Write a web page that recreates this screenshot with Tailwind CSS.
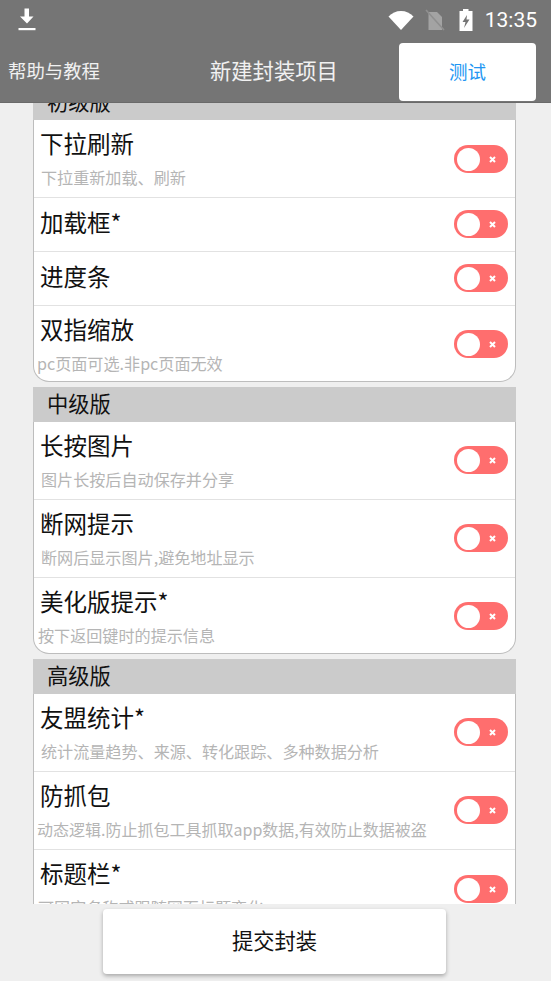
<!doctype html>
<html lang="zh">
<head>
<meta charset="utf-8">
<script src="https://cdn.jsdelivr.net/npm/@tailwindcss/browser@4"></script>
</head>
<body class="m-0">
<div class="relative w-[551px] h-[981px] overflow-hidden bg-[#efefef] flex flex-col font-['Noto_Sans_CJK_SC',sans-serif] text-[#111]">
  <header class="h-[103px] shrink-0 bg-[#757575] border-b border-[#6a6a6a] flex flex-col">
    <div class="h-[40px] shrink-0 flex items-center text-white pl-[18px] pr-[14px]">
      <svg class="w-[18px] h-[24px] mt-[-1px]" viewBox="0 0 18 24" fill="#fff"><path d="M6.500 0.500h4.500v8h4.500L9 15.500 2 8.500h4.500z"/><rect x="0.500" y="20" width="17" height="2.200"/></svg>
      <div class="ml-auto flex items-center">
        <svg class="w-[26px] h-[20px]" viewBox="0 0 26 20" fill="#fff"><path d="M0.500 6.500C4 3 8 1 13 1s9 2 12.500 5.500L13 20z"/></svg>
        <svg class="w-[20px] h-[22px] ml-[11px]" viewBox="0 0 20 22"><path d="M3.500 3H12l5 5v13H3.500z" fill="#a3a3a3"/><path d="M1 1l18 20" stroke="#8f8f8f" stroke-width="1.600"/></svg>
        <svg class="w-[14px] h-[22px] ml-[14px]" viewBox="0 0 14 22"><path fill="#fff" fill-rule="evenodd" d="M4 0h5.500v2H13.500v20H0.500V2H4zM8 6L3.500 13h3L5 19l5.500-8.500H7.500z"/></svg>
        <span class="ml-[12px] text-[21px] leading-none text-white font-['Roboto',sans-serif]">13:35</span>
      </div>
    </div>
    <div class="relative flex-1 flex items-center">
      <span class="pl-[8px] text-[18.400px] leading-none text-white/90 mt-[-2px]">帮助与教程</span>
      <span class="absolute left-[210px] top-[19px] text-[21.300px] leading-none text-white/90">新建封装项目</span>
      <button class="ml-auto mr-[15px] self-start mt-[3px] w-[137px] h-[58px] bg-white rounded-[4px] text-[18.500px] text-[#2196f3]">测试</button>
    </div>
  </header>

  <main class="h-[801px] shrink-0 overflow-hidden">
    <div class="w-[483px] ml-[33px] mt-[-18px] flex flex-col gap-[5px]">

      <section class="flex flex-col">
        <h2 class="h-[35px] bg-[#cbcbcb] pl-[14px] text-[21.300px] leading-[32px] font-normal">初级版</h2>
        <div class="bg-white border-x border-b border-[#bdbdbd] rounded-b-[16px] flex flex-col divide-y divide-[#e2e2e2]">
          <div class="h-[78px] relative flex flex-col pl-[6px]"><span class="text-[23.500px] leading-none mt-[12px]">下拉刷新</span><span class="text-[16.100px] leading-none mt-[13px] pl-[1px] text-[#b5b5b5]">下拉重新加载、刷新</span>
            <span class="absolute right-[7px] top-[25px] w-[54px] h-[28px] rounded-full bg-[#ff6e6e] flex items-center"><span class="ml-[3px] w-[23px] h-[23px] rounded-full bg-white"></span><svg class="ml-[9px] w-[7px] h-[7px]" viewBox="0 0 7 7"><path d="M1 1l5 5M6 1L1 6" stroke="#fff" stroke-width="2"/></svg></span></div>
          <div class="h-[54px] relative flex items-center pl-[6px]"><span class="text-[23.500px] leading-none mt-[-4px]">加载框*</span>
            <span class="absolute right-[7px] top-[12px] w-[54px] h-[28px] rounded-full bg-[#ff6e6e] flex items-center"><span class="ml-[3px] w-[23px] h-[23px] rounded-full bg-white"></span><svg class="ml-[9px] w-[7px] h-[7px]" viewBox="0 0 7 7"><path d="M1 1l5 5M6 1L1 6" stroke="#fff" stroke-width="2"/></svg></span></div>
          <div class="h-[54px] relative flex items-center pl-[6px]"><span class="text-[23.500px] leading-none mt-[-4px]">进度条</span>
            <span class="absolute right-[7px] top-[12px] w-[54px] h-[28px] rounded-full bg-[#ff6e6e] flex items-center"><span class="ml-[3px] w-[23px] h-[23px] rounded-full bg-white"></span><svg class="ml-[9px] w-[7px] h-[7px]" viewBox="0 0 7 7"><path d="M1 1l5 5M6 1L1 6" stroke="#fff" stroke-width="2"/></svg></span></div>
          <div class="h-[75px] relative flex flex-col pl-[3px]"><span class="text-[23.500px] leading-none mt-[12px] pl-[3px]">双指缩放</span><span class="text-[16.100px] leading-none mt-[13px] text-[#b5b5b5]">pc页面可选.非pc页面无效</span>
            <span class="absolute right-[7px] top-[24px] w-[54px] h-[28px] rounded-full bg-[#ff6e6e] flex items-center"><span class="ml-[3px] w-[23px] h-[23px] rounded-full bg-white"></span><svg class="ml-[9px] w-[7px] h-[7px]" viewBox="0 0 7 7"><path d="M1 1l5 5M6 1L1 6" stroke="#fff" stroke-width="2"/></svg></span></div>
        </div>
      </section>

      <section class="flex flex-col">
        <h2 class="h-[35px] bg-[#cbcbcb] pl-[14px] text-[21.300px] leading-[32px] font-normal">中级版</h2>
        <div class="bg-white border-x border-b border-[#bdbdbd] rounded-b-[16px] flex flex-col divide-y divide-[#e2e2e2]">
          <div class="h-[78px] relative flex flex-col pl-[6px]"><span class="text-[23.500px] leading-none mt-[12px]">长按图片</span><span class="text-[16.100px] leading-none mt-[13px] pl-[1px] text-[#b5b5b5]">图片长按后自动保存并分享</span>
            <span class="absolute right-[7px] top-[24px] w-[54px] h-[28px] rounded-full bg-[#ff6e6e] flex items-center"><span class="ml-[3px] w-[23px] h-[23px] rounded-full bg-white"></span><svg class="ml-[9px] w-[7px] h-[7px]" viewBox="0 0 7 7"><path d="M1 1l5 5M6 1L1 6" stroke="#fff" stroke-width="2"/></svg></span></div>
          <div class="h-[78px] relative flex flex-col pl-[6px]"><span class="text-[23.500px] leading-none mt-[12px]">断网提示</span><span class="text-[16.100px] leading-none mt-[13px] pl-[1px] text-[#b5b5b5]">断网后显示图片,避免地址显示</span>
            <span class="absolute right-[7px] top-[24px] w-[54px] h-[28px] rounded-full bg-[#ff6e6e] flex items-center"><span class="ml-[3px] w-[23px] h-[23px] rounded-full bg-white"></span><svg class="ml-[9px] w-[7px] h-[7px]" viewBox="0 0 7 7"><path d="M1 1l5 5M6 1L1 6" stroke="#fff" stroke-width="2"/></svg></span></div>
          <div class="h-[75px] relative flex flex-col pl-[4px]"><span class="text-[23.500px] leading-none mt-[12px] pl-[2px]">美化版提示*</span><span class="text-[16.100px] leading-none mt-[13px] text-[#b5b5b5]">按下返回键时的提示信息</span>
            <span class="absolute right-[7px] top-[24px] w-[54px] h-[28px] rounded-full bg-[#ff6e6e] flex items-center"><span class="ml-[3px] w-[23px] h-[23px] rounded-full bg-white"></span><svg class="ml-[9px] w-[7px] h-[7px]" viewBox="0 0 7 7"><path d="M1 1l5 5M6 1L1 6" stroke="#fff" stroke-width="2"/></svg></span></div>
        </div>
      </section>

      <section class="flex flex-col">
        <h2 class="h-[35px] bg-[#cbcbcb] pl-[14px] text-[21.300px] leading-[32px] font-normal">高级版</h2>
        <div class="bg-white border-x border-b border-[#bdbdbd] rounded-b-[16px] flex flex-col divide-y divide-[#e2e2e2]">
          <div class="h-[78px] relative flex flex-col pl-[6px]"><span class="text-[23.500px] leading-none mt-[12px]">友盟统计*</span><span class="text-[16.100px] leading-none mt-[13px] pl-[1px] text-[#b5b5b5]">统计流量趋势、来源、转化跟踪、多种数据分析</span>
            <span class="absolute right-[7px] top-[24px] w-[54px] h-[28px] rounded-full bg-[#ff6e6e] flex items-center"><span class="ml-[3px] w-[23px] h-[23px] rounded-full bg-white"></span><svg class="ml-[9px] w-[7px] h-[7px]" viewBox="0 0 7 7"><path d="M1 1l5 5M6 1L1 6" stroke="#fff" stroke-width="2"/></svg></span></div>
          <div class="h-[78px] relative flex flex-col pl-[3px]"><span class="text-[23.500px] leading-none mt-[12px] pl-[3px]">防抓包</span><span class="text-[16px] leading-none mt-[13px] text-[#b5b5b5]">动态逻辑.防止抓包工具抓取app数据,有效防止数据被盗</span>
            <span class="absolute right-[7px] top-[24px] w-[54px] h-[28px] rounded-full bg-[#ff6e6e] flex items-center"><span class="ml-[3px] w-[23px] h-[23px] rounded-full bg-white"></span><svg class="ml-[9px] w-[7px] h-[7px]" viewBox="0 0 7 7"><path d="M1 1l5 5M6 1L1 6" stroke="#fff" stroke-width="2"/></svg></span></div>
          <div class="h-[78px] relative flex flex-col pl-[4px]"><span class="text-[23.500px] leading-none mt-[12px] pl-[2px]">标题栏*</span><span class="text-[16.100px] leading-none mt-[13px] text-[#b5b5b5]">可固定名称或跟随网页标题变化</span>
            <span class="absolute right-[7px] top-[25px] w-[54px] h-[28px] rounded-full bg-[#ff6e6e] flex items-center"><span class="ml-[3px] w-[23px] h-[23px] rounded-full bg-white"></span><svg class="ml-[9px] w-[7px] h-[7px]" viewBox="0 0 7 7"><path d="M1 1l5 5M6 1L1 6" stroke="#fff" stroke-width="2"/></svg></span></div>
        </div>
      </section>
    </div>
  </main>

  <footer class="flex-1 flex justify-start items-start pt-[5px] pl-[103px]">
    <button class="w-[343px] h-[65px] pb-[3px] bg-white rounded-[4px] shadow-[0_2px_4px_rgba(0,0,0,0.3)] text-[21.300px] leading-none text-[#111]">提交封装</button>
  </footer>
</div>
</body>
</html>
